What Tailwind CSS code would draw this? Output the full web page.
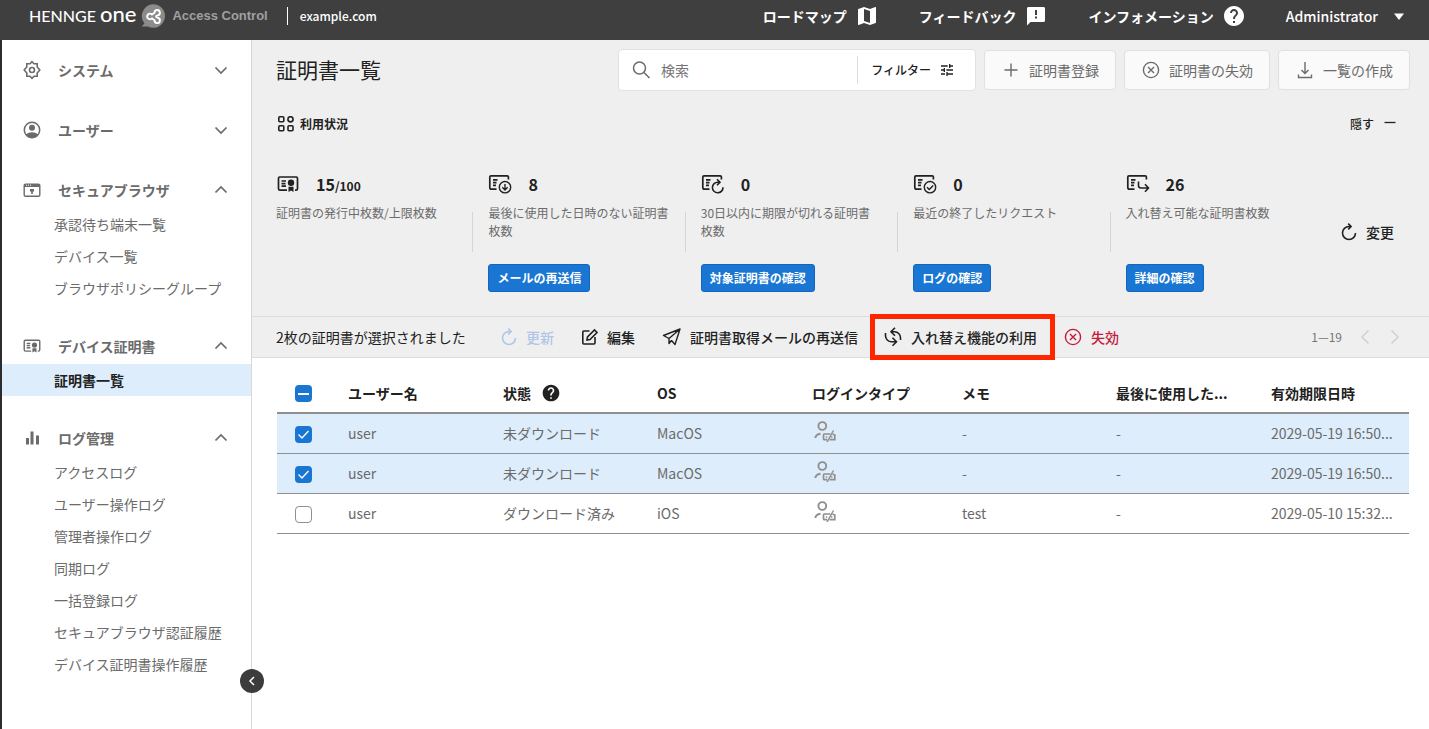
<!DOCTYPE html>
<html lang="ja">
<head>
    <meta charset="UTF-8">
    <meta name="viewport" content="width=device-width, initial-scale=1.0">
    <title>証明書一覧 - HENNGE One Access Control</title>
    <script src="https://cdn.jsdelivr.net/npm/@tailwindcss/browser@4"></script>
</head>
<body class="min-h-screen flex flex-col bg-white font-['Noto_Sans_CJK_JP','Noto_Sans',sans-serif] text-sm text-[#6b6b6b]">

    <svg class="hidden" aria-hidden="true">
        <symbol id="down" viewBox="0 0 14 14"><path d="M1.500 4.500l5.500 5.500 5.500-5.500" fill="none" stroke="currentColor" stroke-width="1.700"/></symbol>
        <symbol id="up" viewBox="0 0 14 14"><path d="M1.500 9.500L7 4l5.500 5.500" fill="none" stroke="currentColor" stroke-width="1.700"/></symbol>
        <symbol id="cross-circle" viewBox="0 0 18 18"><g fill="none" stroke="currentColor" stroke-width="1.400"><circle cx="9" cy="9" r="7.600"/><path d="M6 6l6 6M12 6l-6 6"/></g></symbol>
        <symbol id="refresh" viewBox="0 0 18 18"><g fill="none" stroke="currentColor" stroke-width="1.600"><path d="M11 3.500H9a6.500 6.500 0 1 0 6.500 6.500"/><path d="M8.200.6l2.900 2.900-2.900 2.900"/></g></symbol>
        <symbol id="help" viewBox="0 0 24 24"><path fill="currentColor" d="M12 2C6.480 2 2 6.480 2 12s4.480 10 10 10 10-4.480 10-10S17.520 2 12 2zm1 17h-2v-2h2v2zm2.070-7.750l-.9.920C13.450 12.900 13 13.500 13 15h-2v-.5c0-1.100.45-2.100 1.170-2.830l1.240-1.260c.37-.36.590-.86.590-1.410 0-1.100-.9-2-2-2s-2 .9-2 2H8c0-2.210 1.790-4 4-4s4 1.790 4 4c0 .88-.36 1.680-.93 2.250z"/></symbol>
        <!-- card outline shared by the usage icons -->
        <symbol id="card" viewBox="0 0 24 20"><path d="M8.500 15.200H3.500a1.700 1.700 0 0 1-1.700-1.700V3a1.200 1.200 0 0 1 1.200-1.200h16.200a1.200 1.200 0 0 1 1.200 1.200v2.500M5 5.800h4.500M5 8.600h3.500M5 11.400h3" fill="none" stroke="currentColor" stroke-width="1.700"/></symbol>
        <symbol id="certificate" viewBox="0 0 22 18"><path d="M10 15.200H3a1.500 1.500 0 0 1-1.500-1.500V3.200A1.200 1.200 0 0 1 2.700 2h16.600a1.200 1.200 0 0 1 1.200 1.200v10.500a1.500 1.500 0 0 1-1.500 1.500h-1M4.500 6h4.500M4.500 8.600h4M4.500 11.200h4.500" fill="none" stroke="currentColor" stroke-width="1.700"/><circle cx="14" cy="7.800" r="3.200" fill="currentColor"/><path d="M11.500 11.800h5V17L14 15.500 11.500 17z" fill="currentColor"/></symbol>
        <symbol id="login-type" viewBox="0 0 24 22"><g fill="none" stroke="currentColor" stroke-width="1.900"><circle cx="10.300" cy="6" r="3.900"/><path d="M3.300 18c.3-2.600 2-3.900 5.200-4.300"/><path d="M18.500 14h-6q-1 0-1 1v3.700q0 1 1 1h2.500M17.500 19.700h5.300V15L20.500 14" stroke-width="1.700"/><path d="M15 22l6.500-11.500" stroke-width="1.500"/><path d="M13.800 17h1.400M19 17h1.400" stroke-width="1.500"/></g></symbol>
    </svg>

    <header class="h-10 flex items-center justify-between bg-[#3f3f3f] text-white pl-[29px] pr-6 pb-2">
        <div class="flex items-center">
            <a href="#" class="flex items-center">
                <span class="flex items-baseline gap-1 font-[Lato,sans-serif] leading-5"><span class="text-base font-medium">HENNGE</span><span class="text-[22px] font-medium">one</span></span>
                <svg class="ml-[5px] size-6" viewBox="0 0 24 24"><path d="M12 .2a11.800 11.800 0 1 1-5 22.400H.5l3-3.200A11.800 11.800 0 0 1 12 .2z" fill="#8b8b8b"/><g fill="none" stroke="#fff" stroke-width="1.900"><path d="M11 10.500l2.500-1.800a2.700 2.700 0 1 1 3 2.700c-2 .5-2 1.800 0 2.300a2.700 2.700 0 1 1-3 2.600L11 14.400a2.800 2.800 0 1 1 0-3.900z"/></g></svg>
                <span class="ml-[7px] font-['Liberation_Sans',sans-serif] font-bold text-[13px] text-[#a0a0a0]">Access Control</span>
            </a>
            <span class="ml-[19px] border-l border-white h-[18px] pl-3 flex items-center text-xs font-medium">example.com</span>
        </div>
        <nav class="flex items-center font-bold">
            <a href="#" class="flex items-center gap-2">ロードマップ
                <svg class="size-6" viewBox="0 0 24 24"><path fill="currentColor" d="M20.500 3l-.16.030L15 5.100 9 3 3.360 4.900c-.21.070-.36.250-.36.480V20.500c0 .28.220.5.500.5l.16-.03L9 18.900l6 2.100 5.640-1.900c.21-.07.360-.25.360-.48V3.500c0-.28-.22-.5-.5-.5zM15 19l-6-2.110V5l6 2.110V19z"/></svg>
            </a>
            <a href="#" class="ml-10 flex items-center gap-2">フィードバック
                <svg class="size-6" viewBox="0 0 24 24"><path fill="currentColor" d="M19.500 3h-15C3.700 3 3 3.700 3 4.500V21.500l3.500-3.500h13c.8 0 1.500-.7 1.500-1.500v-12c0-.8-.7-1.500-1.500-1.500zM13 14.500h-2v-2h2v2zm0-3.500h-2V6h2v5z"/></svg>
            </a>
            <a href="#" class="ml-10 flex items-center gap-2">インフォメーション <svg class="size-6"><use href="#help"/></svg></a>
            <button class="ml-10 flex items-center gap-[15px]"><span class="font-medium">Administrator</span><svg class="w-3 h-3" viewBox="0 0 12 12"><path d="M1 3.500h10l-5 6.500z" fill="currentColor"/></svg></button>
        </nav>
    </header>

    <div class="flex-1 flex border-l-2 border-[#2c2c2c]">
        <aside class="relative w-[250px] shrink-0 border-r border-[#d8d8d8] pt-[10px]">
            <button class="h-10 w-full flex items-center gap-4 pl-5 pr-[23px] font-bold">
                <svg class="size-5" viewBox="0 0 20 20"><g fill="none" stroke="currentColor" stroke-width="1.600"><path d="M10 1.700l2 2.100h3.200v3.200L17.800 10l-2.600 3v3.200H12l-2 2.100-2-2.100H4.800V13L2.200 10l2.600-3V3.800H8z"/><circle cx="10" cy="10" r="2.500"/></g></svg>
                <span class="flex-1 text-left">システム</span><svg class="size-[14px]"><use href="#down"/></svg>
            </button>
            <button class="mt-5 h-10 w-full flex items-center gap-4 pl-5 pr-[23px] font-bold">
                <svg class="size-5" viewBox="0 0 20 20"><circle cx="10" cy="10" r="7.700" fill="none" stroke="currentColor" stroke-width="1.500"/><circle cx="10" cy="7.800" r="3" fill="currentColor"/><path d="M3.500 14.500q6.500-4.500 13 0Q14 18 10 18t-6.500-3.500z" fill="currentColor"/></svg>
                <span class="flex-1 text-left">ユーザー</span><svg class="size-[14px]"><use href="#down"/></svg>
            </button>
            <section class="mt-5">
                <button class="h-10 w-full flex items-center gap-4 pl-5 pr-[23px] font-bold">
                    <svg class="size-5" viewBox="0 0 20 20"><rect x="2.200" y="4.200" width="15.600" height="12" rx="1.300" fill="none" stroke="currentColor" stroke-width="1.400"/><path d="M2 4h16v3H2z" fill="currentColor"/><path d="M4 5.200h1M6 5.200h1M8 5.200h1" stroke="#fff"/><path d="M8 9h4v2.500h-1.200V14H9.200v-2.500H8z" fill="currentColor"/></svg>
                    <span class="flex-1 text-left">セキュアブラウザ</span><svg class="size-[14px]"><use href="#up"/></svg>
                </button>
                <ul class="-mt-[2px] leading-8">
                    <li><a href="#" class="block pl-[52px]">承認待ち端末一覧</a></li>
                    <li><a href="#" class="block pl-[52px]">デバイス一覧</a></li>
                    <li><a href="#" class="block pl-[52px]">ブラウザポリシーグループ</a></li>
                </ul>
            </section>
            <section class="mt-[22px]">
                <button class="h-10 w-full flex items-center gap-4 pl-5 pr-[23px] font-bold">
                    <svg class="size-5" viewBox="0 0 20 20"><use href="#certificate" x="1" y="2" width="18" height="16"/></svg>
                    <span class="flex-1 text-left">デバイス証明書</span><svg class="size-[14px]"><use href="#up"/></svg>
                </button>
                <ul class="-mt-[2px] leading-8">
                    <li><a href="#" aria-current="page" class="block pl-[52px] bg-[#deedfc] font-bold text-[#212121]">証明書一覧</a></li>
                </ul>
            </section>
            <section class="mt-[22px]">
                <button class="h-10 w-full flex items-center gap-4 pl-5 pr-[23px] font-bold">
                    <svg class="size-5" viewBox="0 0 20 20"><path d="M4 10h3v6.500H4zM8.500 3.500h3v13h-3zM14 7.500h3v9h-3z" fill="currentColor"/></svg>
                    <span class="flex-1 text-left">ログ管理</span><svg class="size-[14px]"><use href="#up"/></svg>
                </button>
                <ul class="-mt-[2px] leading-8">
                    <li><a href="#" class="block pl-[52px]">アクセスログ</a></li>
                    <li><a href="#" class="block pl-[52px]">ユーザー操作ログ</a></li>
                    <li><a href="#" class="block pl-[52px]">管理者操作ログ</a></li>
                    <li><a href="#" class="block pl-[52px]">同期ログ</a></li>
                    <li><a href="#" class="block pl-[52px]">一括登録ログ</a></li>
                    <li><a href="#" class="block pl-[52px]">セキュアブラウザ認証履歴</a></li>
                    <li><a href="#" class="block pl-[52px]">デバイス証明書操作履歴</a></li>
                </ul>
            </section>
            <button aria-label="メニューを閉じる" class="absolute -right-[13px] bottom-9 size-6 rounded-full bg-[#3c3c3c] text-white flex items-center justify-center">
                <svg class="size-3" viewBox="0 0 12 12"><path d="M8 2L4 6l4 4" fill="none" stroke="currentColor" stroke-width="1.500"/></svg>
            </button>
        </aside>

        <main class="flex-1 min-w-0">
            <div class="bg-[#efefef] h-[276px] pt-[9px]">
                <div class="flex items-center pl-6 pr-[19px] gap-2">
                    <h1 class="flex-1 pb-[2px] text-[21px] text-[#212121] leading-10">証明書一覧</h1>
                    <div class="w-[358px] h-[42px] flex items-center bg-white border border-[#e2e2e2] rounded">
                        <label for="search" class="ml-3"><svg class="size-5" viewBox="0 0 20 20"><g fill="none" stroke="currentColor" stroke-width="1.500"><circle cx="8.500" cy="8" r="6"/><path d="M13 12.500l5.500 5.500"/></g></svg></label>
                        <input id="search" type="text" placeholder="検索" class="flex-1 min-w-0 h-8 pl-[10px] outline-none placeholder:text-[#757575]">
                        <button class="h-7 border-l border-[#dcdcdc] pl-[13px] pr-5 flex items-center gap-2 text-xs font-medium text-[#212121]">フィルター
                            <svg class="size-4" viewBox="0 0 24 24"><path fill="currentColor" d="M3 17v2h6v-2H3zM3 5v2h10V5H3zm10 16v-2h8v-2h-8v-2h-2v6h2zM7 9v2H3v2h4v2h2V9H7zm14 4v-2H11v2h10zm-6-4h2V7h4V5h-4V3h-2v6z"/></svg>
                        </button>
                    </div>
                    <button class="h-10 px-4 flex items-center gap-2 bg-[#fafafa] border border-[#e0e0e0] rounded"><svg class="size-5" viewBox="0 0 20 20"><path d="M10 3.500v13M3.500 10h13" stroke="currentColor" stroke-width="1.400"/></svg>証明書登録</button>
                    <button class="h-10 px-4 flex items-center gap-2 bg-[#fafafa] border border-[#e0e0e0] rounded"><svg class="size-5" viewBox="0 0 20 20"><use href="#cross-circle" x="1" y="1" width="18" height="18"/></svg>証明書の失効</button>
                    <button class="h-10 px-4 flex items-center gap-2 bg-[#fafafa] border border-[#e0e0e0] rounded"><svg class="size-5" viewBox="0 0 20 20"><path d="M10 2v11.500M6.500 10l3.500 3.500 3.500-3.500M3.500 14.500v3h13v-3" fill="none" stroke="currentColor" stroke-width="1.400"/></svg>一覧の作成</button>
                </div>

                <div class="mt-[23px] flex items-center justify-between pl-[26px] pr-8 text-xs text-[#212121] leading-5">
                    <h2 class="flex items-center gap-[6px] font-bold"><svg class="size-4" viewBox="0 0 16 16"><g fill="none" stroke="currentColor" stroke-width="1.600"><rect x=".8" y=".8" width="5" height="5" rx="1"/><circle cx="12.500" cy="3.300" r="2.600"/><rect x=".8" y="9.800" width="5" height="5" rx="1"/><rect x="10" y="9.800" width="5" height="5" rx="1"/></g></svg>利用状況</h2>
                    <button class="flex items-center gap-[9px] font-medium">隠す<svg class="w-[14px] h-4" viewBox="0 0 14 16"><path d="M1.500 6.500h11" stroke="currentColor" stroke-width="1.300"/></svg></button>
                </div>

                <div class="mt-[38px] flex pl-6">
                    <ul class="flex-1 grid grid-cols-5 text-xs leading-[18px]">
                        <li class="relative h-[120px] pr-8">
                            <div class="h-6 flex items-center gap-4 text-[#212121] font-bold"><svg class="w-6 h-5" viewBox="0 0 24 20"><use href="#certificate" x="1" y="1" width="22" height="18"/></svg><p><span class="text-base">15</span>/100</p></div>
                            <p class="mt-2 h-[60px]">証明書の発行中枚数/上限枚数</p>
                        </li>
                        <li class="relative h-[120px] pr-8">
                            <span class="absolute -left-4 top-10 h-10 border-l border-[#d5d5d5]"></span>
                            <div class="h-6 flex items-center gap-4 text-[#212121] font-bold"><svg class="w-6 h-5" viewBox="0 0 24 20"><use href="#card"/><g fill="none" stroke="currentColor" stroke-width="1.400"><circle cx="17" cy="13.200" r="5.700"/><path d="M17 10v6M14.300 13.300l2.700 2.700 2.700-2.700"/></g></svg><p class="text-base">8</p></div>
                            <p class="mt-2 h-[60px]">最後に使用した日時のない証明書枚数</p>
                            <button class="h-7 px-2 rounded-[3px] bg-[#1976d2] border border-[#1565c0] text-white font-bold">メールの再送信</button>
                        </li>
                        <li class="relative h-[120px] pr-10">
                            <span class="absolute -left-4 top-10 h-10 border-l border-[#d5d5d5]"></span>
                            <div class="h-6 flex items-center gap-4 text-[#212121] font-bold"><svg class="w-6 h-5" viewBox="0 0 24 20"><use href="#card"/><g fill="none" stroke="currentColor" stroke-width="1.600"><path d="M18.500 8.200h-1.500a5.300 5.300 0 1 0 5 5M16 5.200l3 3-3 3"/></g></svg><p class="text-base">0</p></div>
                            <p class="mt-2 h-[60px]">30日以内に期限が切れる証明書枚数</p>
                            <button class="h-7 px-2 rounded-[3px] bg-[#1976d2] border border-[#1565c0] text-white font-bold">対象証明書の確認</button>
                        </li>
                        <li class="relative h-[120px] pr-8">
                            <span class="absolute -left-4 top-10 h-10 border-l border-[#d5d5d5]"></span>
                            <div class="h-6 flex items-center gap-4 text-[#212121] font-bold"><svg class="w-6 h-5" viewBox="0 0 24 20"><use href="#card"/><g fill="none" stroke="currentColor" stroke-width="1.400"><circle cx="17" cy="13.200" r="5.700"/><path d="M14 13.200l2.200 2.200 4-4"/></g></svg><p class="text-base">0</p></div>
                            <p class="mt-2 h-[60px]">最近の終了したリクエスト</p>
                            <button class="h-7 px-2 rounded-[3px] bg-[#1976d2] border border-[#1565c0] text-white font-bold">ログの確認</button>
                        </li>
                        <li class="relative h-[120px] pr-8">
                            <span class="absolute -left-4 top-10 h-10 border-l border-[#d5d5d5]"></span>
                            <div class="h-6 flex items-center gap-4 text-[#212121] font-bold"><svg class="w-6 h-5" viewBox="0 0 24 20"><use href="#card"/><path d="M12.500 7.500v4a2.500 2.500 0 0 0 2.500 2.500H22M19 10.200l3.500 3.800L19 17.800" fill="none" stroke="currentColor" stroke-width="1.600"/></svg><p class="text-base">26</p></div>
                            <p class="mt-2 h-[60px]">入れ替え可能な証明書枚数</p>
                            <button class="h-7 px-2 rounded-[3px] bg-[#1976d2] border border-[#1565c0] text-white font-bold">詳細の確認</button>
                        </li>
                    </ul>
                    <button class="w-[91px] pr-[35px] h-[120px] flex items-center justify-end gap-2 whitespace-nowrap font-medium text-[#212121]"><svg class="size-[18px] shrink-0"><use href="#refresh"/></svg>変更</button>
                </div>
            </div>

            <div class="h-[42px] flex items-center pl-6 pr-[27px] bg-[#efefef] border-y border-[#dcdcdc] text-[#212121] whitespace-nowrap">
                <p class="w-[224px]">2枚の証明書が選択されました</p>
                <button disabled class="w-[81px] flex items-center gap-2 font-medium text-[#b0c6e8]"><svg class="size-[18px]"><use href="#refresh"/></svg>更新</button>
                <button class="w-[81px] flex items-center gap-2 font-medium"><svg class="size-[18px]" viewBox="0 0 18 18"><g fill="none" stroke="currentColor" stroke-width="1.600"><path d="M8.500 3H2.800a1 1 0 0 0-1 1v11a1 1 0 0 0 1 1H13a1 1 0 0 0 1-1V9"/><path d="M6 12l.5-3L13.500 2l2.500 2.500-7 7z"/></g></svg>編集</button>
                <button class="w-[208px] flex items-center gap-2 font-medium"><svg class="size-5" viewBox="0 0 20 20"><path d="M18 2L1.500 8.500l5.500 3zM18 2l-5 15.500-3.500-4M7 11.500v5l2.500-3" fill="none" stroke="currentColor" stroke-width="1.400" stroke-linejoin="round"/></svg>証明書取得メールの再送信</button>
                <button class="w-[185px] h-[46px] flex items-center gap-2 pl-2 border-5 border-[#ff2600] font-medium"><svg class="size-5" viewBox="0 0 20 20"><g fill="none" stroke="currentColor" stroke-width="1.600"><path d="M12 .8L8 4.800l4 4M8 4.800h3.500a6 6 0 0 1 6 6V13M9.500 10.700l4 4-4 4M13.500 14.700H8.500a6 6 0 0 1-6-6V6"/></g></svg>入れ替え機能の利用</button>
                <button class="ml-[9px] flex items-center gap-[9px] font-medium text-[#c51a3d]"><svg class="size-[18px]"><use href="#cross-circle"/></svg>失効</button>
                <div class="ml-auto flex items-center gap-4 text-[#757575]">
                    <span class="text-xs">1—19</span>
                    <button disabled aria-label="前へ" class="text-[#d0d0d0]"><svg class="size-[14px]" viewBox="0 0 14 14"><path d="M10.500 .5L4 7l6.500 6.500" fill="none" stroke="currentColor" stroke-width="1.500"/></svg></button>
                    <button disabled aria-label="次へ" class="text-[#d0d0d0]"><svg class="size-[14px]" viewBox="0 0 14 14"><path d="M3.500 .5L10 7l-6.500 6.500" fill="none" stroke="currentColor" stroke-width="1.500"/></svg></button>
                </div>
            </div>

            <div class="pl-[25px] pr-5 pt-[15px]">
                <table class="w-full table-fixed text-left">
                    <colgroup><col class="w-[71px]"><col class="w-[155px]"><col class="w-[154px]"><col class="w-[155px]"><col class="w-[150px]"><col class="w-[154px]"><col class="w-[155px]"><col></colgroup>
                    <thead class="text-[#212121]">
                        <tr class="h-10 border-b-2 border-[#8f8f8f]">
                            <th class="pl-[18px] pt-[2px]"><input type="checkbox" checked aria-label="すべて選択" class="block appearance-none size-[17px] rounded bg-[#1976d2] bg-[linear-gradient(#fff,#fff)] bg-[length:11px_2px] bg-center bg-no-repeat"></th>
                            <th>ユーザー名</th>
                            <th><span class="flex items-center gap-[10px]">状態 <svg class="size-5"><use href="#help"/></svg></span></th>
                            <th>OS</th>
                            <th>ログインタイプ</th>
                            <th>メモ</th>
                            <th>最後に使用した...</th>
                            <th>有効期限日時</th>
                        </tr>
                    </thead>
                    <tbody>
                        <tr class="h-10 bg-[#deedfc] border-b border-[#8f8f8f]">
                            <td class="pl-[18px] pt-[2px]"><span class="relative block size-[17px]"><input type="checkbox" checked aria-label="userを選択" class="block appearance-none size-[17px] rounded bg-[#1976d2]"><svg class="absolute inset-0 size-[17px] pointer-events-none" viewBox="0 0 17 17"><path d="M3.500 8.500l3.500 3.500 6.500-7" fill="none" stroke="#fff" stroke-width="1.300"/></svg></span></td>
                            <td>user</td><td>未ダウンロード</td><td>MacOS</td>
                            <td class="pb-1"><svg class="w-6 h-[22px] text-[#8f8f8f]"><use href="#login-type"/></svg></td>
                            <td>-</td><td>-</td><td>2029-05-19 16:50...</td>
                        </tr>
                        <tr class="h-10 bg-[#deedfc] border-b border-[#8f8f8f]">
                            <td class="pl-[18px] pt-[2px]"><span class="relative block size-[17px]"><input type="checkbox" checked aria-label="userを選択" class="block appearance-none size-[17px] rounded bg-[#1976d2]"><svg class="absolute inset-0 size-[17px] pointer-events-none" viewBox="0 0 17 17"><path d="M3.500 8.500l3.500 3.500 6.500-7" fill="none" stroke="#fff" stroke-width="1.300"/></svg></span></td>
                            <td>user</td><td>未ダウンロード</td><td>MacOS</td>
                            <td class="pb-1"><svg class="w-6 h-[22px] text-[#8f8f8f]"><use href="#login-type"/></svg></td>
                            <td>-</td><td>-</td><td>2029-05-19 16:50...</td>
                        </tr>
                        <tr class="h-10 border-b border-[#8f8f8f]">
                            <td class="pl-[18px] pt-[2px]"><input type="checkbox" aria-label="userを選択" class="block appearance-none size-[17px] rounded border border-[#8f8f8f] bg-white"></td>
                            <td>user</td><td>ダウンロード済み</td><td>iOS</td>
                            <td class="pb-1"><svg class="w-6 h-[22px] text-[#8f8f8f]"><use href="#login-type"/></svg></td>
                            <td>test</td><td>-</td><td>2029-05-10 15:32...</td>
                        </tr>
                    </tbody>
                </table>
            </div>
        </main>
    </div>
</body>
</html>
